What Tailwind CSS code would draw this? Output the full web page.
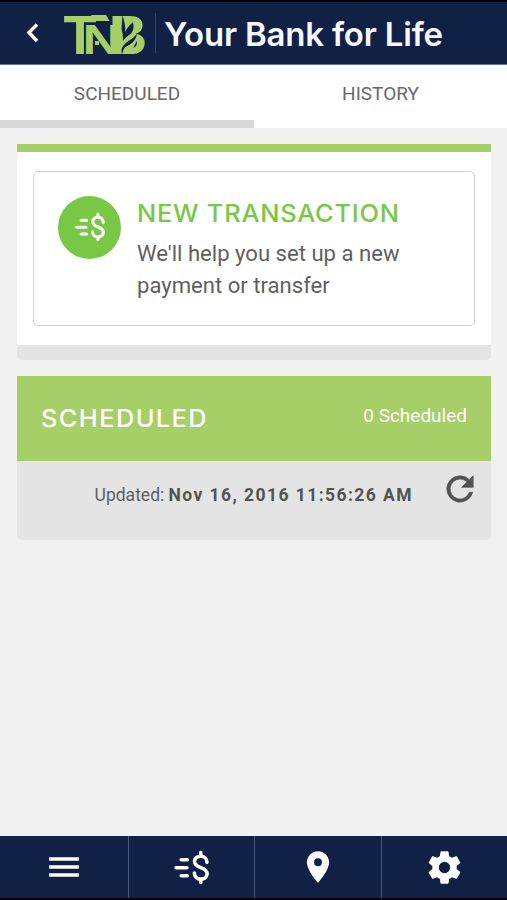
<!doctype html>
<html lang="en">
  <head>
    <meta charset="UTF-8" />
    <meta name="viewport" content="width=device-width, initial-scale=1.0" />
    <title>TNB Mobile Banking</title>
    <script src="https://cdn.jsdelivr.net/npm/@tailwindcss/browser@4"></script>
  </head>
  <body class="bg-[#f1f1f1] font-['Roboto',sans-serif] text-[#5f5f5f]">
    <!-- Icon shared by the card and the bottom bar -->
    <svg class="hidden">
      <symbol id="transfer" viewBox="0 0 34 34">
        <g fill="none" stroke="#fff" stroke-width="3.500" stroke-linecap="round">
          <path d="M7 9.500h6M2 17.200h10.500M7 25h6" />
          <path
            d="M32 12C32 8.500 29.600 6 26 6s-6 2.200-6 5.300c0 6.500 12.200 5 12.200 11.500 0 3.200-2.500 5.500-6.200 5.500s-6.200-2.500-6.200-6"
          />
          <path d="M26 2.500v3M26 29v2.500" />
        </g>
      </symbol>
    </svg>

    <div class="h-[900px] flex flex-col overflow-hidden">
      <!-- Header -->
      <header class="h-[65px] shrink-0 bg-[#102145] border-t-2 border-black border-b border-b-[#6a7393] flex items-center">
        <svg class="w-[14px] h-[22px] ml-[26px] shrink-0" viewBox="0 0 14 22" fill="none" stroke="#fff" stroke-width="3.500">
          <path d="M11 2.500L3 10.500l8 8.500" />
        </svg>
        <svg class="w-[82px] h-[42px] ml-[23px] mt-[1px] shrink-0 overflow-visible" viewBox="0 0 82 42">
          <g fill="#a6cf68" font-weight="700" class="font-['Liberation_Sans',sans-serif]">
            <text x="0.500" y="40.500" font-size="56" textLength="33" lengthAdjust="spacingAndGlyphs">T</text>
            <text x="19.500" y="40.500" font-size="43" textLength="38" lengthAdjust="spacingAndGlyphs">N</text>
            <text x="46" y="40.500" font-size="56" textLength="38" lengthAdjust="spacingAndGlyphs">B</text>
          </g>
          <!-- arm of the T, and the leaf inside the B -->
          <path d="M28 2h15l3.500 6H32z" fill="#a6cf68" />
          <path d="M32 28h4v4h-4z" fill="#a6cf68" />
          <path d="M56 6h12l6 8-3 6 4 6-5 9H56z" fill="#a6cf68" />
          <path d="M59.500 2c1.500 6 3.500 11 2.500 17 2-4 4.500-7 8-10 1 5 .500 8-1.500 11-2 2-5 3-8.500 8 0-6-.5-9-1.500-12z" fill="#102145" />
          <path d="M74 20.500c-1 6-4 10-10 12.500-3 1.500-4 4-5 8.500-1.500-5 .500-9 4.500-12 3-2.500 7-4 10.500-9z" fill="#102145" />
        </svg>
        <div class="w-px h-[40px] ml-[10px] bg-[#34466a]"></div>
        <h1 class="ml-[8px] mt-[3px] font-['Inter',sans-serif] font-semibold text-[33px] tracking-[-0.200px] leading-none text-[#f5f8ff] whitespace-nowrap">
          Your Bank for Life
        </h1>
      </header>

      <!-- Tabs -->
      <nav class="h-[63px] shrink-0 bg-white flex text-[19px] leading-none text-[#696969]">
        <div class="w-[254px] border-b-[8px] border-[#d8d8d8] pt-[19px] text-center">SCHEDULED</div>
        <div class="flex-1 pt-[19px] text-center">HISTORY</div>
      </nav>

      <main class="flex-1 px-4 pt-4">
        <!-- New transaction -->
        <section class="w-[474px] ml-[1px] h-[216px] bg-white border-t-[8px] border-t-[#a6cf68] border-b-[15px] border-b-[#e4e4e4] rounded-b-[5px] p-4 pt-[19px]">
          <div class="h-[155px] border border-[#d3d3d3] rounded-[5px] flex pt-6 pl-6">
            <div class="w-[63px] h-[63px] shrink-0 rounded-full bg-[#78c846] flex items-center justify-center">
              <svg class="w-[32px] h-[30px] mb-[2px]"><use href="#transfer" /></svg>
            </div>
            <div class="ml-4">
              <h2 class="mt-[5px] origin-left scale-x-106 font-['Inter',sans-serif] font-medium text-[24px] tracking-[0.7px] leading-[26px] text-[#78c846] whitespace-nowrap">
                NEW TRANSACTION
              </h2>
              <p class="mt-[10px] text-[22.100px] leading-[32px] whitespace-nowrap">
                We'll help you set up a new<br />payment or transfer
              </p>
            </div>
          </div>
        </section>

        <!-- Scheduled -->
        <section class="w-[474px] ml-[1px] mt-4 rounded-b-[5px] overflow-hidden bg-[#e4e4e4]">
          <div class="h-[85px] bg-[#a6cf68] px-6 flex justify-between text-white">
            <h2 class="mt-[30px] origin-left scale-x-106 font-['Inter',sans-serif] font-medium text-[24px] tracking-[1.3px] leading-[26px]">
              SCHEDULED
            </h2>
            <span class="mt-[28px] text-[19px] leading-6">0 Scheduled</span>
          </div>
          <div class="h-[79px] pr-[17px] flex justify-end">
            <p class="mt-[22px] text-[17.500px] leading-6 whitespace-nowrap">
              Updated:
              <b class="tracking-[1.430px] text-[#535353]">Nov 16, 2016 11:56:26 AM</b>
            </p>
            <svg class="w-[28px] h-[28px] mt-[14px] ml-[33px] shrink-0" viewBox="3.500 3.500 17 17" fill="#535353" stroke="#535353" stroke-width="0.400">
              <path d="M17.650 6.350A7.958 7.958 0 0 0 12 4a8 8 0 1 0 7.730 10h-2.080A6 6 0 1 1 12 6c1.660 0 3.140.69 4.220 1.780L13 11h7V4z" />
            </svg>
          </div>
        </section>
      </main>

      <!-- Bottom bar -->
      <footer class="h-[64px] shrink-0 bg-[#102145] border-b-2 border-black grid grid-cols-[128px_126px_127px_1fr]">
        <div class="flex items-center justify-center">
          <svg class="w-[30px] h-[22px]" viewBox="0 0 30 22" stroke="#fff" stroke-width="3.500">
            <path d="M0 3h30M0 11h30M0 19h30" />
          </svg>
        </div>
        <div class="border-l border-[#47577a] flex items-center justify-center">
          <svg class="w-[35px] h-[35px]"><use href="#transfer" /></svg>
        </div>
        <div class="border-l border-[#47577a] flex items-center justify-center">
          <svg class="w-[38px] h-[38px]" viewBox="0 0 24 24" fill="#fff">
            <path d="M12 2C8.130 2 5 5.130 5 9c0 5.250 7 13 7 13s7-7.750 7-13c0-3.870-3.130-7-7-7zm0 9.500a2.500 2.500 0 0 1 0-5 2.500 2.500 0 0 1 0 5z" />
          </svg>
        </div>
        <div class="border-l border-[#47577a] flex items-center justify-center">
          <svg class="w-[39px] h-[39px]" viewBox="0 0 24 24" fill="#fff">
            <path d="M19.430 12.980c.04-.32.07-.64.07-.98s-.03-.66-.07-.98l2.110-1.650c.19-.15.24-.42.12-.64l-2-3.460c-.12-.22-.39-.3-.61-.22l-2.490 1c-.52-.4-1.080-.73-1.690-.98l-.38-2.650C14.460 2.180 14.250 2 14 2h-4c-.25 0-.46.18-.49.42l-.38 2.650c-.61.25-1.170.59-1.690.98l-2.490-1c-.23-.09-.49 0-.61.22l-2 3.460c-.13.22-.07.49.12.64l2.110 1.650c-.04.32-.07.65-.07.98s.03.66.07.98l-2.110 1.650c-.19.15-.24.42-.12.64l2 3.460c.12.22.39.3.61.22l2.490-1c.52.4 1.080.73 1.690.98l.38 2.650c.03.24.24.42.49.42h4c.25 0 .46-.18.49-.42l.38-2.650c.61-.25 1.170-.59 1.690-.98l2.490 1c.23.09.49 0 .61-.22l2-3.460c.12-.22.07-.49-.12-.64zM12 15.500a3.500 3.500 0 1 1 0-7 3.500 3.500 0 0 1 0 7z" />
          </svg>
        </div>
      </footer>
    </div>
  </body>
</html>
